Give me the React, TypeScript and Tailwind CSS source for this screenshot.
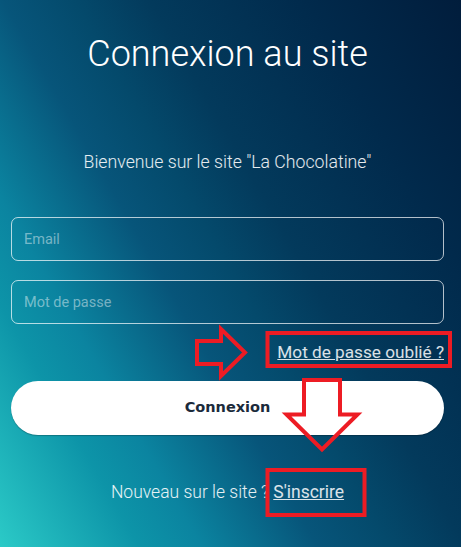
const Annotations = () => (
  <svg
    className="pointer-events-none absolute inset-0"
    width="461"
    height="547"
    viewBox="0 0 461 547"
    fill="none"
  >
    <g stroke="#ed1c24" strokeWidth="4" strokeLinejoin="miter">
      <polygon points="197,341 221,341 221,329 245,352.5 221,376 221,364 197,364" />
      <rect x="267.5" y="333" width="182.5" height="33" />
      <polygon points="304,380 340,380 340,414.5 357.5,414.5 322,449.5 286.5,414.5 304,414.5" />
      <rect x="267.5" y="470" width="97" height="45" />
    </g>
  </svg>
);

const App = () => {
  return (
    <div className="relative h-[547px] w-[461px] overflow-hidden bg-[linear-gradient(60deg,#2bcac7_0%,#0d94a8_18%,#0b84a0_26%,#07557a_41%,#044a6c_50%,#033a5c_60%,#012a4c_80%,#011d3c_100%)] font-['Roboto',sans-serif]">
      <div className="ml-[11px] flex w-[433px] flex-col">
        <h1 className="pt-[33px] text-center text-[36px] leading-[42px] font-light text-white">
          Connexion au site
        </h1>
        <p className="mt-[77px] text-center text-[17.7px] leading-[20px] font-light text-white/90">
          Bienvenue sur le site "La Chocolatine"
        </p>
        <form className="flex flex-col" onSubmit={(e) => e.preventDefault()}>
          <input
            type="email"
            placeholder="Email"
            className="mt-[45px] h-[44px] rounded-[7px] border border-white/70 bg-transparent px-[12px] text-[14.5px] text-white outline-none placeholder:text-white/45"
          />
          <input
            type="password"
            placeholder="Mot de passe"
            className="mt-[19px] h-[44px] rounded-[7px] border border-white/70 bg-transparent px-[12px] text-[14.5px] text-white outline-none placeholder:text-white/45"
          />
          <div className="mt-[18px] flex justify-end">
            <a
              href="#"
              className="text-[17.2px] leading-[20px] text-white/85 underline"
            >
              Mot de passe oublié ?
            </a>
          </div>
          <button
            type="submit"
            className="mt-[19px] h-[54px] rounded-full bg-white font-['DejaVu_Sans',sans-serif] text-[14.5px] font-bold text-[#1b2a3b] shadow-[0_1px_1px_rgba(0,0,0,0.25)]"
          >
            Connexion
          </button>
        </form>
        <p className="mt-[47px] text-center text-[17.5px] leading-[20px] font-light text-white/90">
          Nouveau sur le site ?{" "}
          <a href="#" className="font-normal text-white/85 underline">
            S'inscrire
          </a>
        </p>
      </div>
      <Annotations />
    </div>
  );
};

export default App;
